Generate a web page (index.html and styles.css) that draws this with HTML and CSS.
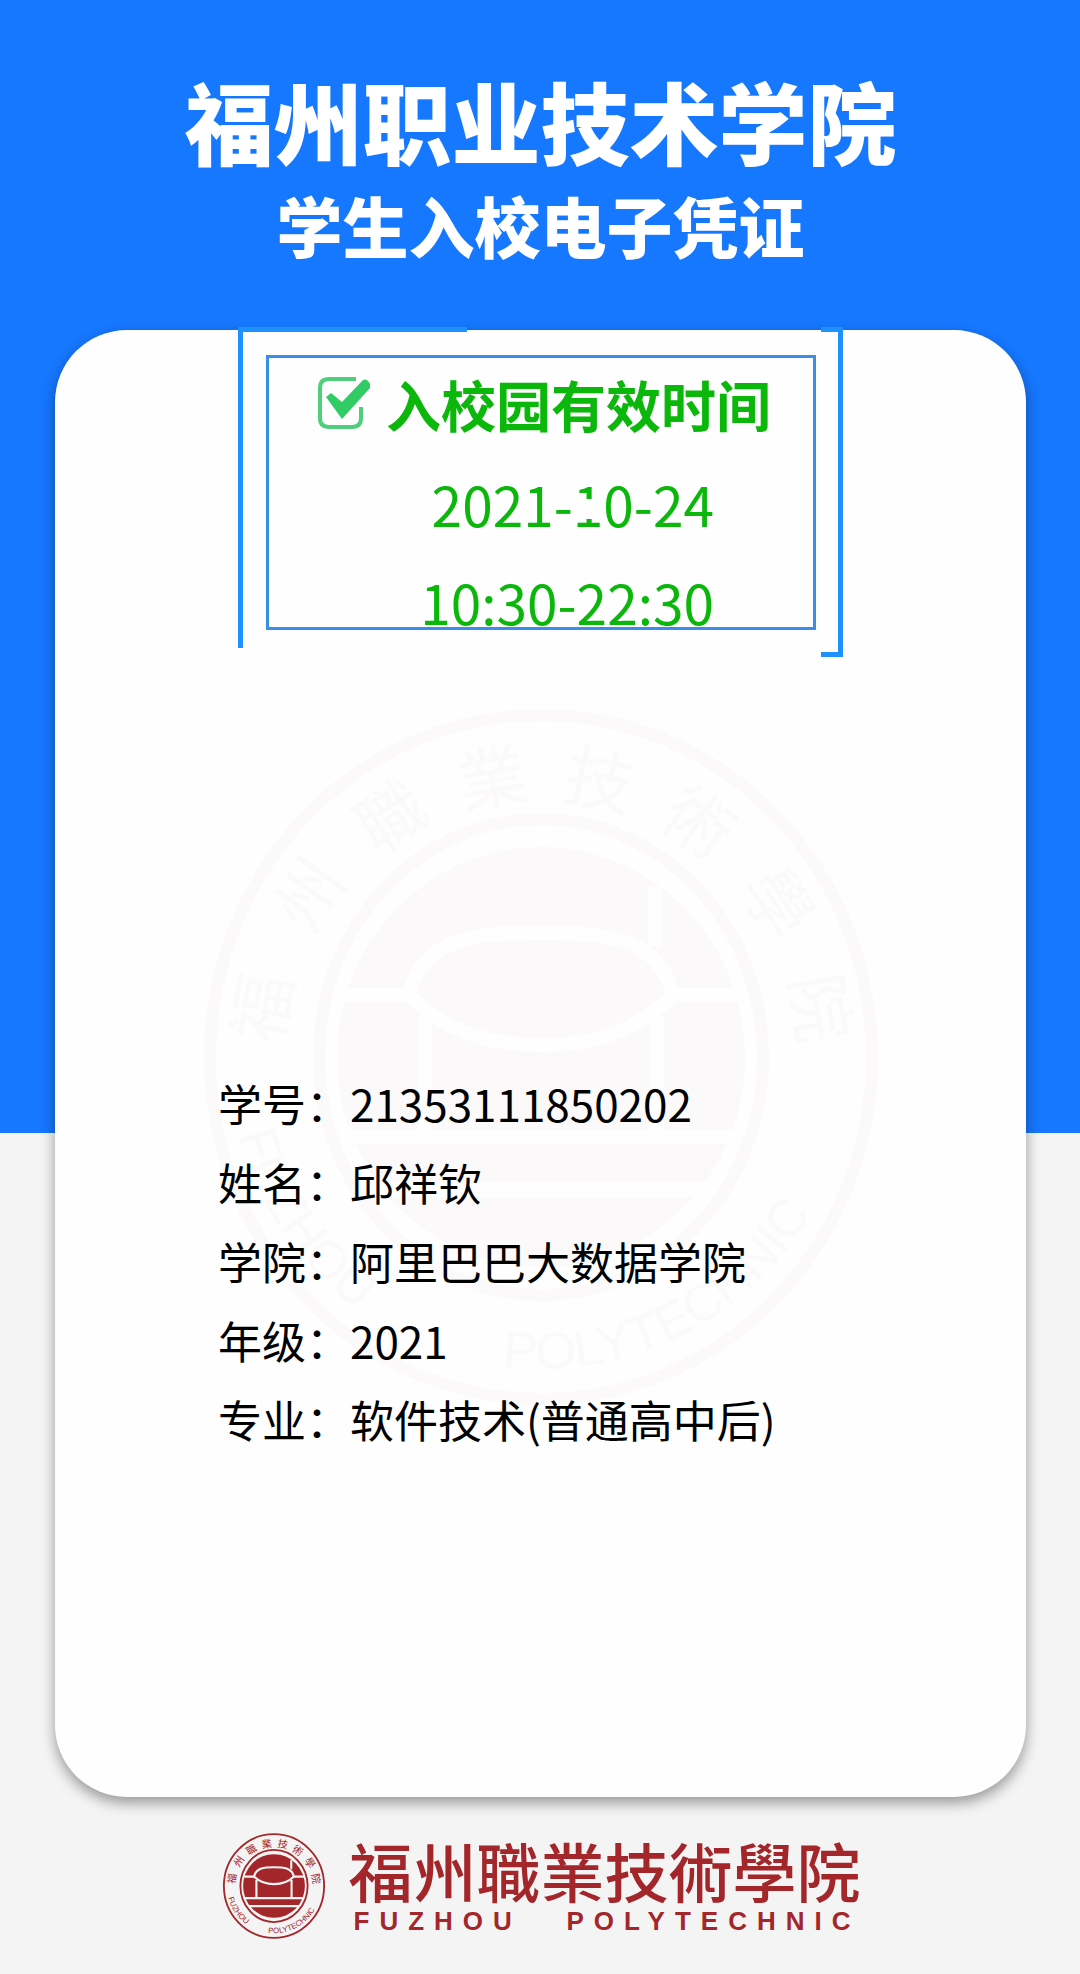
FILE: index.html
```html
<!DOCTYPE html>
<html lang="zh-CN">
<head>
<meta charset="utf-8">
<meta name="viewport" content="width=device-width, initial-scale=1">
<title>学生入校电子凭证</title>
<link rel="stylesheet" href="styles.css">
</head>
<body>
<div class="page">
  <header class="header">
    <h1 class="school">福州职业技术学院</h1>
    <p class="subtitle">学生入校电子凭证</p>
  </header>

  <main class="card">
    <svg class="watermark" viewBox="-350 -350 700 700" aria-hidden="true">
      <g id="seal">
        <path id="seal-arc" d="M-312 0A312 312 0 0 0 312 0" fill="none"/>
        <ellipse class="seal-ring" rx="331" ry="342"/>
        <ellipse class="seal-ring" rx="222" ry="238"/>
        <ellipse rx="204" ry="210" fill="currentColor"/>
        <g class="seal-gap">
          <path d="M-196-62H-132C-118-122 -60-124 0-124S118-122 132-62H198"/>
          <path d="M-132-62C-100-30 -60-12 0-12S100-30 132-62"/>
          <path d="M-116-40V76M116-40V76M114-170V-110"/>
          <path d="M-196 80H196M-166 133H166"/>
        </g>
        <g class="seal-name">
          <text y="-258" transform="rotate(-80)">福</text>
          <text y="-258" transform="rotate(-55)">州</text>
          <text y="-258" transform="rotate(-32)">職</text>
          <text y="-258" transform="rotate(-10)">業</text>
          <text y="-258" transform="rotate(12)">技</text>
          <text y="-258" transform="rotate(34)">術</text>
          <text y="-258" transform="rotate(57)">學</text>
          <text y="-258" transform="rotate(80)">院</text>
        </g>
        <text class="seal-latin"><textPath href="#seal-arc" startOffset="8%">FUZHOU</textPath></text>
        <text class="seal-latin"><textPath href="#seal-arc" startOffset="46%">POLYTECHNIC</textPath></text>
      </g>
    </svg>
    <section class="validity">
      <div class="validity-box">
        <h2 class="validity-title">
          <svg class="check" viewBox="0 0 52 52" aria-hidden="true">
            <path d="M38 2H11Q2 2 2 11V41Q2 50 11 50H34Q43 50 43 41V30" fill="none" stroke="#4fcf7c" stroke-width="4"/>
            <path d="M8 20L13 16L24 25L45 3Q49 1 52 7V11L24 42Z" fill="#32cc66"/>
          </svg>
          入校园有效时间
        </h2>
        <p class="validity-time">2021-<span class="worn">1</span>0-24</p>
        <p class="validity-time">10:30-22:30</p>
      </div>
    </section>
    <dl class="info">
      <div class="row"><dt>学号：</dt><dd>21353111850202</dd></div>
      <div class="row"><dt>姓名：</dt><dd>邱祥钦</dd></div>
      <div class="row"><dt>学院：</dt><dd>阿里巴巴大数据学院</dd></div>
      <div class="row"><dt>年级：</dt><dd>2021</dd></div>
      <div class="row"><dt>专业：</dt><dd>软件技术(普通高中后)</dd></div>
    </dl>
  </main>

  <footer class="footer">
    <svg class="logo" viewBox="-350 -350 700 700" aria-hidden="true"><use href="#seal"/></svg>
    <div class="brand">
      <p class="brand-name" lang="zh-TW">福州職業技術學院</p>
      <p class="brand-latin"><span>FUZHOU</span><span>POLYTECHNIC</span></p>
    </div>
  </footer>
</div>
</body>
</html>
```

FILE: styles.css
```css
*, *::before, *::after { box-sizing: border-box; }

body, h1, h2, p, dl, dd { margin: 0; }

body {
  background: #f4f4f4;
  color: #000;
  font-family: "Noto Sans CJK SC", sans-serif;
}

.page {
  min-height: 100vh;
  padding: 0 54px 0 55px;
  background: linear-gradient(#1677ff 57.4%, #f4f4f4 57.4%);
}

.header {
  padding: 64px 0 58px;
  text-align: center;
  color: #fff;
  white-space: nowrap;
}

.school { font-size: 89px; line-height: 112px; font-weight: 900; }
.subtitle { font-size: 66px; line-height: 96px; font-weight: 900; }

.card {
  position: relative;
  padding-bottom: 338px;
  border-radius: 72px;
  background: #fefefe;
  box-shadow: 0 6px 14px rgba(0, 0, 0, .38);
}

.watermark {
  position: absolute;
  top: 377px;
  left: 50%;
  width: 700px;
  height: 700px;
  margin-left: -350px;
  color: #fbf9fa;
  --paper: #fefefe;
}

.seal-ring { fill: none; stroke: currentColor; stroke-width: 12; }
.seal-gap { fill: none; stroke: var(--paper); stroke-width: 14; }
.seal-name { font-size: 68px; fill: currentColor; text-anchor: middle; }
.seal-latin { font: 52px "Liberation Sans", sans-serif; fill: currentColor; }

.validity {
  position: relative;
  top: -3px;
  width: 605px;
  margin: 0 auto;
  padding: 28px 27px 27px 28px;
}

.validity::before,
.validity::after {
  content: "";
  position: absolute;
  top: 0;
  border: 5px solid #1e90ff;
}

.validity::before {
  left: 0;
  width: 229px;
  height: 321px;
  border-right: 0;
  border-bottom: 0;
}

.validity::after {
  right: 0;
  width: 22px;
  height: 330px;
  border-left: 0;
}

.validity-box {
  border: 3px solid #3a8ee6;
  padding-left: 49px;
  color: #0bb70b;
}

.validity-title {
  display: flex;
  align-items: center;
  gap: 16px;
  padding-bottom: 6px;
  font-size: 55px;
  line-height: 90px;
  font-weight: 700;
  white-space: nowrap;
}

.check { flex: none; width: 52px; height: 52px; }

.validity-time {
  padding-right: 99px;
  font-size: 55px;
  line-height: 98px;
  text-align: right;
}

.validity-time:last-child { margin-bottom: -23px; }

/* worn patch in the stem of the digit */
.worn { position: relative; }
.worn::after {
  content: "";
  position: absolute;
  top: 36px;
  left: 6px;
  width: 20px;
  height: 20px;
  background: #fefefe;
}

.info {
  position: relative;
  margin-top: 404px;
  padding-left: 163px;
  font-size: 44px;
  line-height: 79px;
}

.row { display: flex; }

.footer {
  display: flex;
  justify-content: center;
  gap: 22px;
  padding-top: 36px;
  color: #a3262a;
  --paper: #f4f4f4;
}

.logo { width: 106px; height: 106px; }

.brand-name {
  font-family: "Noto Sans CJK TC", sans-serif;
  font-size: 64px;
  line-height: 72px;
  font-weight: 500;
}

.brand-latin {
  display: flex;
  justify-content: space-between;
  padding-left: 5px;
  font: bold 26px/32px "Liberation Sans", sans-serif;
  letter-spacing: 10px;
}
```
